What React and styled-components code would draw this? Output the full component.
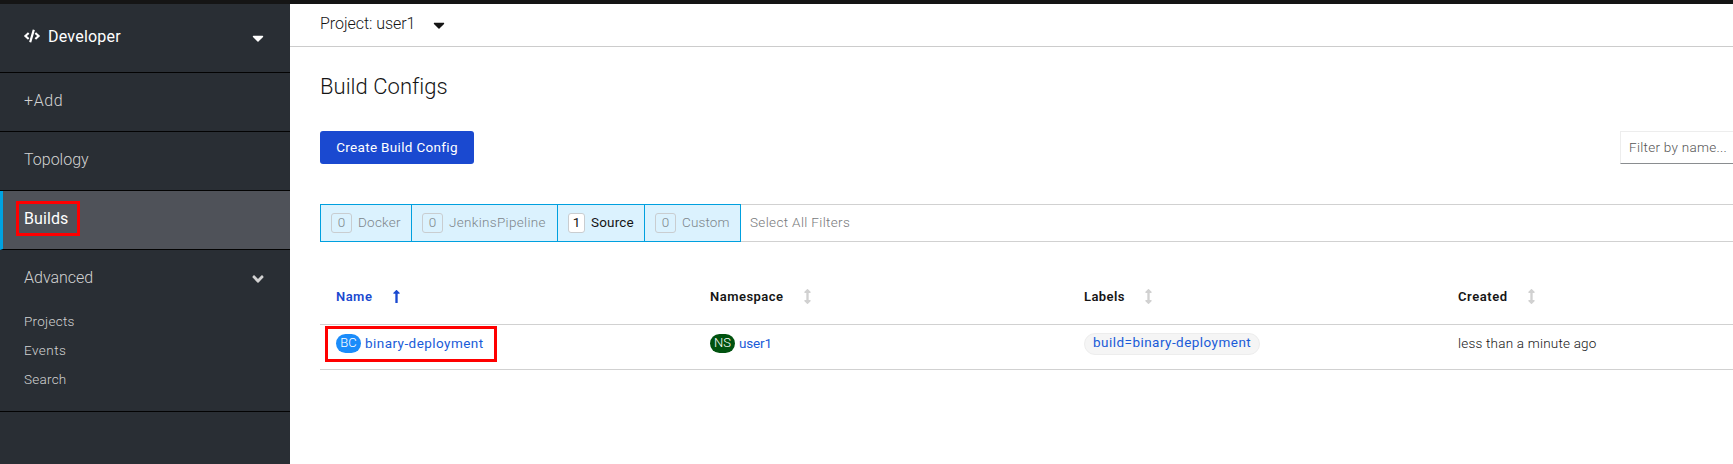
import React from 'react';
import styled, { createGlobalStyle } from 'styled-components';
import { FaCode, FaCaretDown, FaLongArrowAltUp, FaArrowsAltV, FaAngleDown } from 'react-icons/fa';

const GlobalStyle = createGlobalStyle`
  * { box-sizing: border-box; }
  body {
    margin: 0;
    overflow: hidden;
    background: #fff;
    color: #151515;
    font-family: Roboto, "Liberation Sans", sans-serif;
    font-size: 13.5px;
    font-weight: 300;
  }
`;

const Page = styled.div`
  display: flex;
  flex-direction: column;
  height: 464px;
  overflow: hidden;
`;

const Masthead = styled.div`
  flex: 0 0 4px;
  background: #151515;
`;

const Body = styled.div`
  flex: 1;
  display: flex;
  min-height: 0;
`;

const Sidebar = styled.nav`
  flex: 0 0 290px;
  background: #292e34;
  color: #d2d2d2;
  font-size: 16px;
`;

const Label = styled.span`
  letter-spacing: ${(p) => p.$track || 0}px;
  white-space: nowrap;
`;

const Perspective = styled.div`
  display: flex;
  align-items: center;
  height: 69px;
  padding: 0 23px 4px 24px;
  border-bottom: 1px solid #030303;
  color: #fff;
  font-weight: 400;

  > svg { margin-right: 8px; }
`;

const PushRight = styled.span`
  display: flex;
  margin-left: auto;
  padding-top: ${(p) => p.$drop || 0}px;
`;

const NavItem = styled.div`
  display: flex;
  align-items: center;
  height: 59px;
  padding: 0 23px 3px ${(p) => (p.$active ? 21 : 24)}px;
  border-bottom: 1px solid #030303;
  ${(p) => p.$active && `
    border-left: 3px solid #00a2e1;
    background: #4f5259;
    color: #fff;
    font-weight: 400;
  `}
`;

const NavHighlight = styled.span`
  display: flex;
  align-items: center;
  height: 35px;
  width: 64px;
  margin-left: -8px;
  padding: 0 0 0 5px;
  border: 3px solid #f00;
`;

const NavGroup = styled.div`
  height: 162px;
  border-bottom: 1px solid #030303;
`;

const GroupTitle = styled.div`
  display: flex;
  align-items: center;
  height: 57px;
  padding: 0 23px 2px 24px;
`;

const SubItem = styled.div`
  height: 29px;
  padding-left: 24px;
  line-height: 29px;
  font-size: 13.5px;
`;

const Main = styled.main`
  flex: 1;
  min-width: 0;
  overflow: hidden;
`;

const ProjectBar = styled.div`
  display: flex;
  align-items: center;
  height: 43px;
  padding: 0 0 3px 30px;
  border-bottom: 1px solid #ccc;
  font-size: 16px;

  svg { margin: 3px 0 0 15px; }
`;

const Content = styled.div`
  display: flex;
  flex-direction: column;
  width: 1526px;
  padding-left: 30px;
`;

const Title = styled.h1`
  height: 84px;
  margin: 0;
  padding-top: 26px;
  font-size: 22px;
  font-weight: 300;
  line-height: 28px;
`;

const Toolbar = styled.div`
  display: flex;
  justify-content: space-between;
  height: 33px;
`;

const PrimaryButton = styled.button`
  width: 154px;
  padding: 0 0 2px;
  border: 0;
  border-radius: 3px;
  background: #1a49d0;
  color: #fff;
  font: 400 13.5px Roboto, sans-serif;
`;

const FilterInput = styled.input`
  width: 196px;
  padding: 0 8px 2px;
  border: 1px solid #ededed;
  border-bottom-color: #8a8d90;
  font: 300 13.5px Roboto, sans-serif;
  letter-spacing: 0.286px;
  &::placeholder { color: #555; opacity: 1; }
`;

const FilterBar = styled.div`
  display: flex;
  height: 38px;
  margin-top: 40px;
  border: 1px solid #d1d1d1;
  border-left: 0;
`;

const FilterChip = styled.div`
  display: flex;
  align-items: center;
  gap: 6px;
  width: ${(p) => p.$width}px;
  margin: -1px 0;
  padding: 0 0 2px 10px;
  border: 1px solid #00a0df;
  border-right-width: ${(p) => (p.$last ? 1 : 0)}px;
  background: #dbf2fe;
  color: ${(p) => (p.$on ? '#151515' : '#7d868b')};
  font-weight: ${(p) => (p.$on ? 400 : 300)};
`;

const Count = styled.span`
  width: ${(p) => (p.$on ? 17 : 21)}px;
  height: 20px;
  margin-top: 2px;
  border: 1px solid #c9cdd0;
  border-radius: 3px;
  background: ${(p) => (p.$on ? '#fff' : 'transparent')};
  line-height: 17px;
  text-align: center;
`;

const SelectAll = styled.div`
  padding-left: 9px;
  color: #77797b;
  line-height: 34px;
`;

const Row = styled.div`
  display: grid;
  grid-template-columns: repeat(4, 374px);
  grid-template-rows: minmax(0, 1fr);
  align-items: center;
  height: ${(p) => p.$height}px;
  padding: ${(p) => p.$drop || 0}px 0 ${(p) => p.$lift || 0}px;
  border-bottom: 1px solid #d1d1d1;
`;

const HeadCell = styled.div`
  display: flex;
  align-items: center;
  padding-left: 16px;
  color: ${(p) => (p.$sorted ? '#1a49d0' : '#151515')};
  font-size: 13px;
  font-weight: 600;

  svg {
    margin-left: ${(p) => (p.$sorted ? 17 : 16)}px;
    color: ${(p) => (p.$sorted ? '#1a49d0' : '#d1d1d1')};
  }
`;

const Cell = styled.div`
  display: flex;
  align-items: center;
  padding-left: 16px;
`;

const Link = styled.a`
  color: #1a5bd8;
  font-weight: 400;
`;

const Badge = styled.span`
  width: 25px;
  height: 19px;
  margin: 2px 4px 0 0;
  border-radius: 10px;
  background: ${(p) => p.$color};
  color: #fff;
  font-size: 13px;
  line-height: 17px;
  text-align: center;
`;

const RowHighlight = styled.div`
  display: flex;
  align-items: center;
  width: 172px;
  height: 36px;
  margin: 3px 0 0 -11px;
  padding: 0 0 3px 8px;
  border: 3px solid #f00;
`;

const Pill = styled.span`
  height: 22px;
  margin-top: 3px;
  padding: 0 8px;
  border: 1px solid #ededed;
  border-radius: 11px;
  background: #f5f5f5;
  line-height: 17px;
`;

const filters = [
  { name: 'Docker', count: 0, width: 91, track: 0.232 },
  { name: 'JenkinsPipeline', count: 0, width: 146, track: 0.318 },
  { name: 'Source', count: 1, width: 87, track: 0.165 },
  { name: 'Custom', count: 0, width: 97, track: 0.139 },
];

const columns = [
  { name: 'Name', track: 0.47, sorted: true },
  { name: 'Namespace', track: 0.484 },
  { name: 'Labels', track: 0.42 },
  { name: 'Created', track: 0.576 },
];

export default function App() {
  return (
    <Page>
      <GlobalStyle />
      <Masthead />
      <Body>
        <Sidebar>
          <Perspective>
            <FaCode size={16} />
            <Label $track={0.22}>Developer</Label>
            <PushRight $drop={3}><FaCaretDown size={18} /></PushRight>
          </Perspective>
          <NavItem><Label $track={0.6}>+Add</Label></NavItem>
          <NavItem><Label>Topology</Label></NavItem>
          <NavItem $active>
            <NavHighlight><Label $track={0.08}>Builds</Label></NavHighlight>
          </NavItem>
          <NavGroup>
            <GroupTitle>
              <Label>Advanced</Label>
              <PushRight $drop={2}><FaAngleDown size={18} /></PushRight>
            </GroupTitle>
            <SubItem><Label $track={0.262}>Projects</Label></SubItem>
            <SubItem><Label $track={0.468}>Events</Label></SubItem>
            <SubItem><Label $track={0.25}>Search</Label></SubItem>
          </NavGroup>
        </Sidebar>
        <Main>
          <ProjectBar>
            <Label $track={-0.05}>Project: user1</Label>
            <FaCaretDown size={18} />
          </ProjectBar>
          <Content>
            <Title><Label $track={0.03}>Build Configs</Label></Title>
            <Toolbar>
              <PrimaryButton><Label $track={0.324}>Create Build Config</Label></PrimaryButton>
              <FilterInput placeholder="Filter by name..." />
            </Toolbar>
            <FilterBar>
              {filters.map((f, i) => (
                <FilterChip key={f.name} $width={f.width} $on={f.count > 0} $last={i === filters.length - 1}>
                  <Count $on={f.count > 0}>{f.count}</Count>
                  <Label $track={f.track}>{f.name}</Label>
                </FilterChip>
              ))}
              <SelectAll><Label $track={0.36}>Select All Filters</Label></SelectAll>
            </FilterBar>
            <Row $height={83} $drop={26}>
              {columns.map((c) => (
                <HeadCell key={c.name} $sorted={c.sorted}>
                  <Label $track={c.track}>{c.name}</Label>
                  {c.sorted ? <FaLongArrowAltUp size={15} /> : <FaArrowsAltV size={15} />}
                </HeadCell>
              ))}
            </Row>
            <Row $height={45} $lift={9}>
              <Cell>
                <RowHighlight>
                  <Badge $color="#1a8cfa">BC</Badge>
                  <Link><Label $track={0.447}>binary-deployment</Label></Link>
                </RowHighlight>
              </Cell>
              <Cell>
                <Badge $color="#00520f">NS</Badge>
                <Link><Label $track={-0.16}>user1</Label></Link>
              </Cell>
              <Cell>
                <Pill><Link><Label $track={0.461}>build=binary-deployment</Label></Link></Pill>
              </Cell>
              <Cell><Label $track={0.21}>less than a minute ago</Label></Cell>
            </Row>
          </Content>
        </Main>
      </Body>
    </Page>
  );
}
